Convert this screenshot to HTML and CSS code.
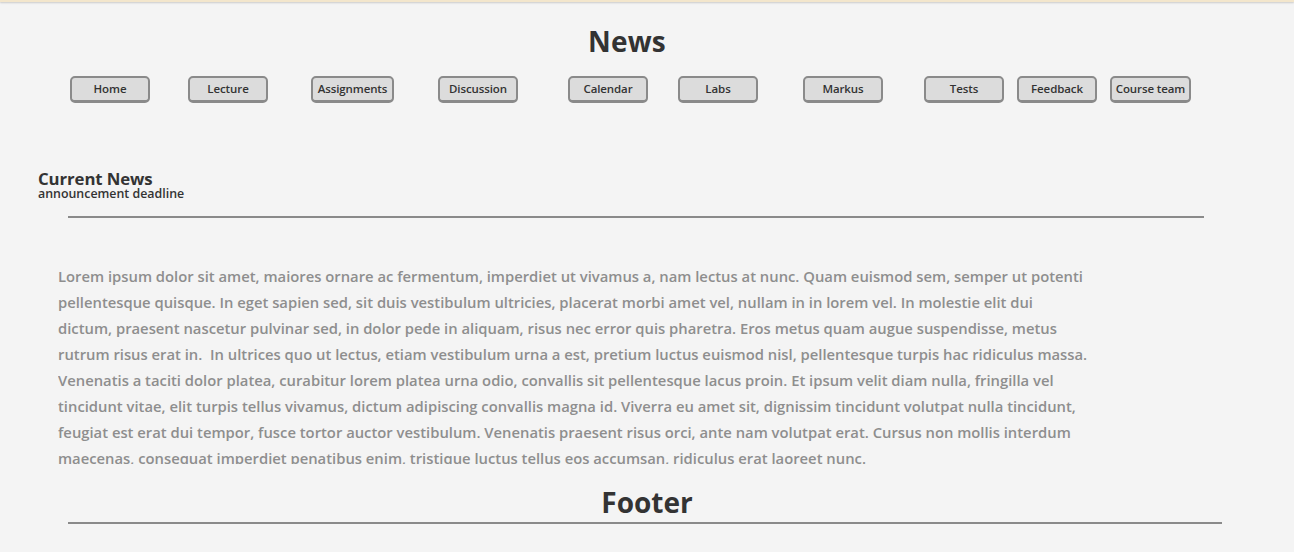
FILE: index.html
```html
<!DOCTYPE html>
<html lang="en">
<head>
<meta charset="utf-8">
<title>News</title>
<link rel="stylesheet" href="styles.css">
</head>
<body>
<div class="topbar"></div>
<header class="header">
  <h1 class="title">News</h1>
  <nav class="nav">
    <a class="btn" href="#">Home</a>
    <a class="btn" href="#">Lecture</a>
    <a class="btn wide" href="#">Assignments</a>
    <a class="btn" href="#">Discussion</a>
    <a class="btn" href="#">Calendar</a>
    <a class="btn" href="#">Labs</a>
    <a class="btn" href="#">Markus</a>
    <a class="btn" href="#">Tests</a>
    <a class="btn" href="#">Feedback</a>
    <a class="btn last" href="#">Course team</a>
  </nav>
</header>
<main class="main">
  <div class="section-head">
    <h2 class="section-title">Current News</h2>
    <div class="section-sub">announcement deadline</div>
  </div>
  <hr class="rule rule-news">
  <div class="content">
    <p class="lorem">Lorem ipsum dolor sit amet, maiores ornare ac fermentum, imperdiet ut vivamus a, nam lectus at nunc. Quam euismod sem, semper ut potenti<br>pellentesque quisque. In eget sapien sed, sit duis vestibulum ultricies, placerat morbi amet vel, nullam in in lorem vel. In molestie elit dui<br>dictum, praesent nascetur pulvinar sed, in dolor pede in aliquam, risus nec error quis pharetra. Eros metus quam augue suspendisse, metus<br>rutrum risus erat in.&nbsp; In ultrices quo ut lectus, etiam vestibulum urna a est, pretium luctus euismod nisl, pellentesque turpis hac ridiculus massa.<br>Venenatis a taciti dolor platea, curabitur lorem platea urna odio, convallis sit pellentesque lacus proin. Et ipsum velit diam nulla, fringilla vel<br>tincidunt vitae, elit turpis tellus vivamus, dictum adipiscing convallis magna id. Viverra eu amet sit, dignissim tincidunt volutpat nulla tincidunt,<br>feugiat est erat dui tempor, fusce tortor auctor vestibulum. Venenatis praesent risus orci, ante nam volutpat erat. Cursus non mollis interdum<br>maecenas, consequat imperdiet penatibus enim, tristique luctus tellus eos accumsan, ridiculus erat laoreet nunc.</p>
  </div>
</main>
<footer class="footer">
  <h2 class="footer-title">Footer</h2>
  <hr class="rule rule-footer">
</footer>
</body>
</html>
```

FILE: styles.css
```css
html, body {
  margin: 0;
  padding: 0;
}
body {
  background: #f4f4f4;
  font-family: "Open Sans", Lato, "Liberation Sans", sans-serif;
  color: #333;
  width: 1294px;
  height: 552px;
  overflow: hidden;
}
.topbar {
  height: 2px;
  background: #f3e6cc;
  box-shadow: 0 1px 2px rgba(0,0,0,0.18);
}
.header {
  display: flex;
  flex-direction: column;
  align-items: center;
}
.title {
  margin: 22px 40px 0 0;
  font-size: 28px;
  line-height: 34px;
  font-weight: 700;
  color: #333;
  letter-spacing: 0.2px;
}
.nav {
  display: flex;
  width: 100%;
  margin-top: 18px;
  padding-left: 70px;
  box-sizing: border-box;
}
.btn {
  display: flex;
  align-items: center;
  justify-content: center;
  box-sizing: border-box;
  width: 80px;
  height: 27px;
  padding-bottom: 1px;
  background: #dcdcdc;
  border: 2px solid #8a8a8a;
  border-bottom-width: 3px;
  border-radius: 5px;
  color: #333;
  font-size: 11.5px;
  font-weight: 600;
  letter-spacing: -0.1px;
  text-decoration: none;
  white-space: nowrap;
}
.btn.wide { width: 83px; }
.btn.last { width: 81px; }
.btn:nth-child(2) { margin-left: 38px; }
.btn:nth-child(3) { margin-left: 43px; }
.btn:nth-child(4) { margin-left: 44px; }
.btn:nth-child(5) { margin-left: 50px; }
.btn:nth-child(6) { margin-left: 30px; }
.btn:nth-child(7) { margin-left: 45px; }
.btn:nth-child(8) { margin-left: 41px; }
.btn:nth-child(9) { margin-left: 13px; }
.btn:nth-child(10) { margin-left: 13px; }

.main {
  padding-top: 67px;
}
.section-head {
  padding-left: 38px;
}
.section-title {
  margin: 0;
  font-size: 16.8px;
  line-height: 17px;
  font-weight: 700;
  color: #333;
  letter-spacing: -0.1px;
}
.section-sub {
  font-size: 12.4px;
  line-height: 14px;
  font-weight: 600;
  color: #333;
}
.rule {
  border: 0;
  height: 2px;
  background: #8a8a8a;
  margin: 0;
}
.rule-news {
  margin: 15px 0 0 68px;
  width: 1136px;
}
.content {
  padding: 45px 0 0 58px;
  width: 1150px;
}
.lorem {
  margin: 0;
  font-size: 14.8px;
  line-height: 26px;
  color: #8e8e8e;
  font-weight: 600;
  white-space: nowrap;
  height: 201px;
  overflow: hidden;
}
.footer {
  display: flex;
  flex-direction: column;
  align-items: center;
}
.footer-title {
  margin: 21px 0 0;
  font-size: 28px;
  line-height: 34px;
  font-weight: 700;
  color: #333;
}
.rule-footer {
  align-self: flex-start;
  margin: 3px 0 0 68px;
  width: 1154px;
}
```
